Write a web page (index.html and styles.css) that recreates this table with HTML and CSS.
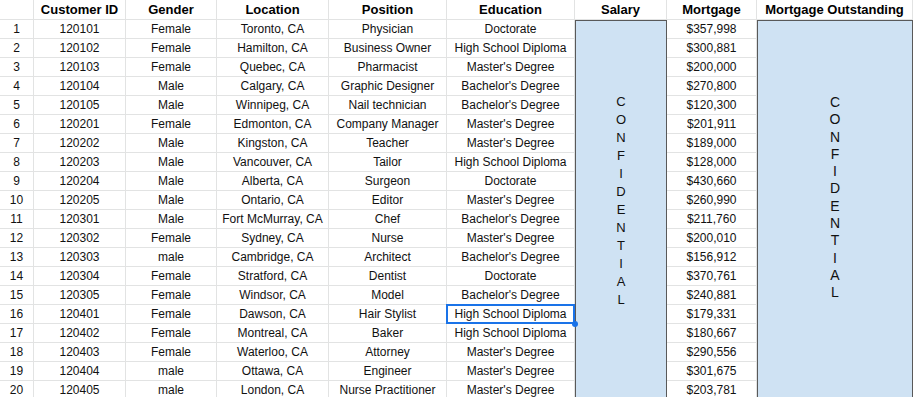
FILE: index.html
```html
<!DOCTYPE html>
<html lang="en">
<head>
<meta charset="utf-8">
<title>Customers</title>
<link rel="stylesheet" href="styles.css">
</head>
<body>
<div class="sheet">
  <div class="hd"></div>
  <div class="hd">Customer ID</div>
  <div class="hd">Gender</div>
  <div class="hd">Location</div>
  <div class="hd">Position</div>
  <div class="hd">Education</div>
  <div class="hd">Salary</div>
  <div class="hd">Mortgage</div>
  <div class="hd">Mortgage Outstanding</div>

  <div class="box box-salary"><div class="vtext">CONFIDENTIAL</div></div>
  <div class="box box-out"><div class="vtext vtext-lg">CONFIDENTIAL</div></div>

  <div class="c">1</div><div class="c">120101</div><div class="c">Female</div><div class="c">Toronto, CA</div><div class="c">Physician</div><div class="c">Doctorate</div><div class="c m">$357,998</div>
  <div class="c">2</div><div class="c">120102</div><div class="c">Female</div><div class="c">Hamilton, CA</div><div class="c">Business Owner</div><div class="c">High School Diploma</div><div class="c m">$300,881</div>
  <div class="c">3</div><div class="c">120103</div><div class="c">Female</div><div class="c">Quebec, CA</div><div class="c">Pharmacist</div><div class="c">Master's Degree</div><div class="c m">$200,000</div>
  <div class="c">4</div><div class="c">120104</div><div class="c">Male</div><div class="c">Calgary, CA</div><div class="c">Graphic Designer</div><div class="c">Bachelor's Degree</div><div class="c m">$270,800</div>
  <div class="c">5</div><div class="c">120105</div><div class="c">Male</div><div class="c">Winnipeg, CA</div><div class="c">Nail technician</div><div class="c">Bachelor's Degree</div><div class="c m">$120,300</div>
  <div class="c">6</div><div class="c">120201</div><div class="c">Female</div><div class="c">Edmonton, CA</div><div class="c">Company Manager</div><div class="c">Master's Degree</div><div class="c m">$201,911</div>
  <div class="c">7</div><div class="c">120202</div><div class="c">Male</div><div class="c">Kingston, CA</div><div class="c">Teacher</div><div class="c">Master's Degree</div><div class="c m">$189,000</div>
  <div class="c">8</div><div class="c">120203</div><div class="c">Male</div><div class="c">Vancouver, CA</div><div class="c">Tailor</div><div class="c">High School Diploma</div><div class="c m">$128,000</div>
  <div class="c">9</div><div class="c">120204</div><div class="c">Male</div><div class="c">Alberta, CA</div><div class="c">Surgeon</div><div class="c">Doctorate</div><div class="c m">$430,660</div>
  <div class="c">10</div><div class="c">120205</div><div class="c">Male</div><div class="c">Ontario, CA</div><div class="c">Editor</div><div class="c">Master's Degree</div><div class="c m">$260,990</div>
  <div class="c">11</div><div class="c">120301</div><div class="c">Male</div><div class="c">Fort McMurray, CA</div><div class="c">Chef</div><div class="c">Bachelor's Degree</div><div class="c m">$211,760</div>
  <div class="c">12</div><div class="c">120302</div><div class="c">Female</div><div class="c">Sydney, CA</div><div class="c">Nurse</div><div class="c">Master's Degree</div><div class="c m">$200,010</div>
  <div class="c">13</div><div class="c">120303</div><div class="c">male</div><div class="c">Cambridge, CA</div><div class="c">Architect</div><div class="c">Bachelor's Degree</div><div class="c m">$156,912</div>
  <div class="c">14</div><div class="c">120304</div><div class="c">Female</div><div class="c">Stratford, CA</div><div class="c">Dentist</div><div class="c">Doctorate</div><div class="c m">$370,761</div>
  <div class="c">15</div><div class="c">120305</div><div class="c">Female</div><div class="c">Windsor, CA</div><div class="c">Model</div><div class="c">Bachelor's Degree</div><div class="c m">$240,881</div>
  <div class="c">16</div><div class="c">120401</div><div class="c">Female</div><div class="c">Dawson, CA</div><div class="c">Hair Stylist</div><div class="c selected">High School Diploma</div><div class="c m">$179,331</div>
  <div class="c">17</div><div class="c">120402</div><div class="c">Female</div><div class="c">Montreal, CA</div><div class="c">Baker</div><div class="c">High School Diploma</div><div class="c m">$180,667</div>
  <div class="c">18</div><div class="c">120403</div><div class="c">Female</div><div class="c">Waterloo, CA</div><div class="c">Attorney</div><div class="c">Master's Degree</div><div class="c m">$290,556</div>
  <div class="c">19</div><div class="c">120404</div><div class="c">male</div><div class="c">Ottawa, CA</div><div class="c">Engineer</div><div class="c">Master's Degree</div><div class="c m">$301,675</div>
  <div class="c">20</div><div class="c">120405</div><div class="c">male</div><div class="c">London, CA</div><div class="c">Nurse Practitioner</div><div class="c">Master's Degree</div><div class="c m">$203,781</div>
</div>
</body>
</html>
```

FILE: styles.css
```css
html, body {
  margin: 0;
  padding: 0;
  background: #ffffff;
  overflow: hidden;
}

body {
  font-family: "Liberation Sans", Arial, sans-serif;
  color: #111111;
}

.sheet {
  display: grid;
  grid-template-columns: 34px 92px 91px 112px 118px 128px 92px 90px 156px;
  grid-template-rows: 20px repeat(20, 19px);
  width: 913px;
}

.hd,
.c {
  box-sizing: border-box;
  border-right: 1px solid #e2e3e3;
  border-bottom: 1px solid #e2e3e3;
  text-align: center;
  white-space: nowrap;
  overflow: hidden;
}

.hd {
  font-size: 13px;
  font-weight: bold;
  line-height: 19px;
  color: #000000;
}

.c {
  font-size: 12px;
  line-height: 19px;
}

.m {
  grid-column: 8;
}

.box {
  box-sizing: border-box;
  grid-row: 2 / span 20;
  background: #cfe2f3;
  border: 1px solid #595959;
  border-bottom: none;
  color: #111111;
}

.box-salary {
  grid-column: 7;
  padding-top: 72px;
}

.box-out {
  grid-column: 9;
  padding-top: 73px;
}

.vtext {
  width: min-content;
  margin: 0 auto;
  word-break: break-all;
  text-align: center;
  font-size: 13px;
  line-height: 18px;
}

.vtext-lg {
  font-size: 14px;
  line-height: 17.3px;
}

.selected {
  position: relative;
  overflow: visible;
}

.selected::after {
  content: "";
  position: absolute;
  left: -1px;
  top: -1px;
  right: -1px;
  bottom: -1px;
  border: 2px solid #1a73e8;
}

.selected::before {
  content: "";
  position: absolute;
  right: -4px;
  bottom: -4px;
  width: 6px;
  height: 6px;
  border-radius: 50%;
  background: #1a73e8;
  z-index: 2;
}
```
